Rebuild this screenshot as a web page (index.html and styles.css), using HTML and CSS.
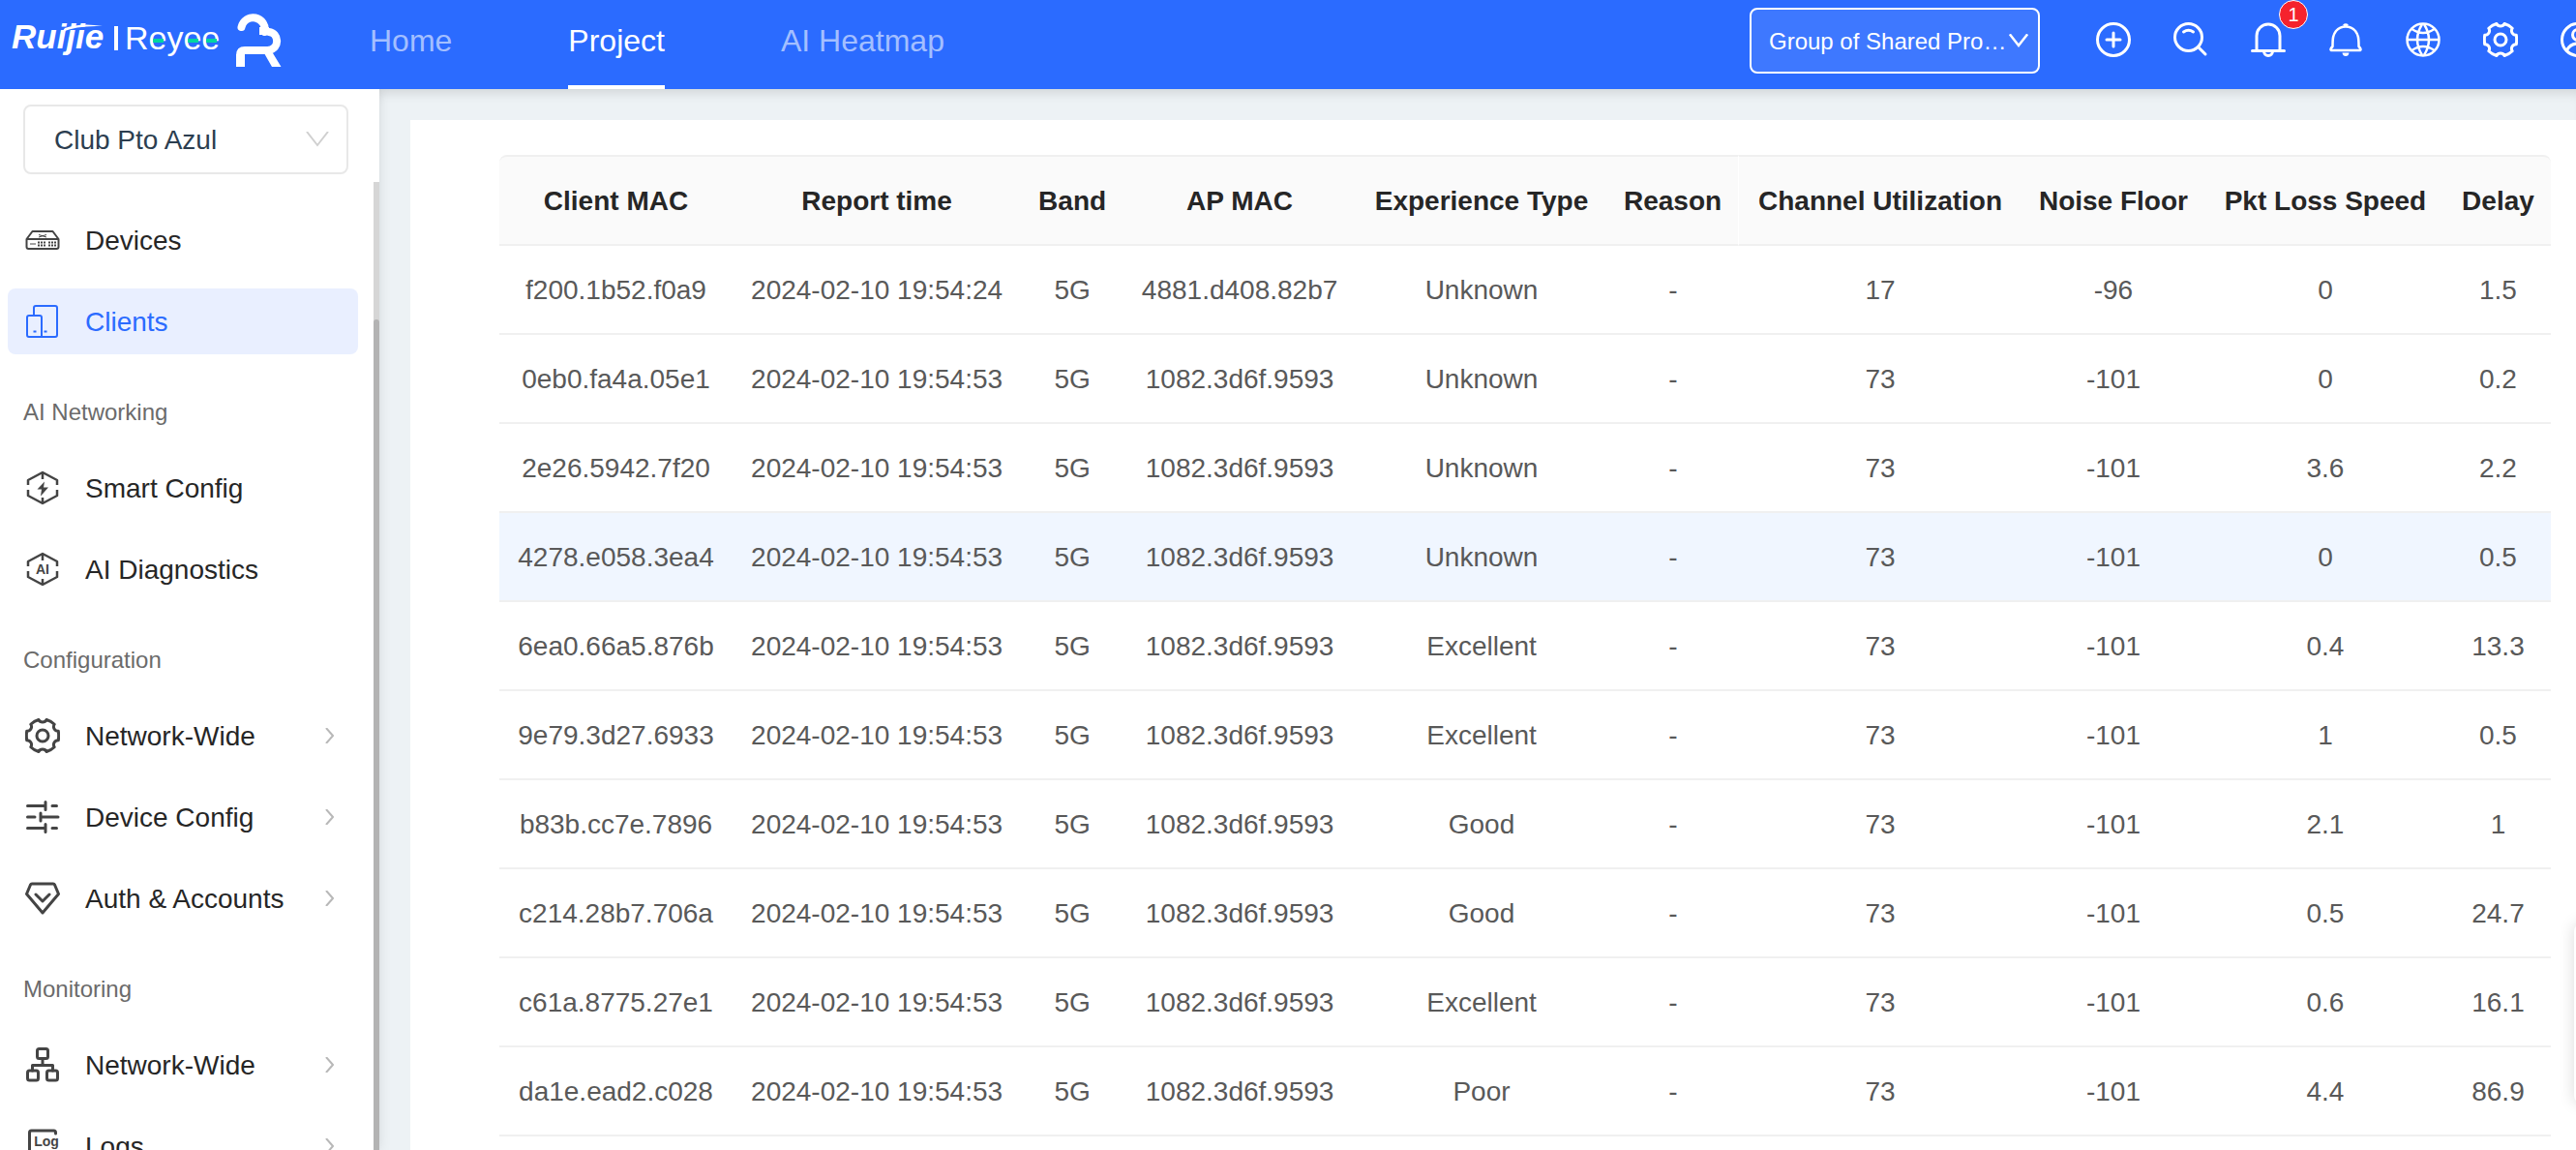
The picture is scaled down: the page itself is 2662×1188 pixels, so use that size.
FILE: index.html
```html
<!DOCTYPE html>
<html lang="en">
<head>
<meta charset="utf-8">
<title>Clients</title>
<link rel="stylesheet" href="styles.css">
</head>
<body>
<svg class="sprite" aria-hidden="true">
  <symbol id="gear" viewBox="0 0 36 36"><path d="M34.3 13.3Q35 18 34.3 22.7A4.6 4.6 0 0 0 30.2 29.8Q27 33 22.1 34.5A4.6 4.6 0 0 0 13.9 34.5Q9 33 5.8 29.8A4.6 4.6 0 0 0 1.7 22.7Q1 18 1.7 13.3A4.6 4.6 0 0 0 5.8 6.2Q9 3 13.9 1.5A4.6 4.6 0 0 0 22.1 1.5Q27 3 30.2 6.2A4.6 4.6 0 0 0 34.3 13.3Z"/><circle cx="18" cy="18" r="6"/></symbol>
  <symbol id="down" viewBox="0 0 24 16"><path d="M1 0 12 14 23 0"/></symbol>
  <symbol id="right" viewBox="0 0 10 16"><path d="M1 0 8 8 1 16"/></symbol>
  <symbol id="hex" viewBox="0 0 36 36"><path d="M3 15V10L18 2 33 10V15M3 20V26L18 34 33 26V20M18 2V9M18 34V28"/></symbol>
  <symbol id="tree" viewBox="0 0 36 36"><rect x="12.5" y="1.500" width="11" height="10" rx="2"/><rect x="2.500" y="24" width="11" height="10" rx="2"/><rect x="22.500" y="24" width="11" height="10" rx="2"/><path d="M18 11.500V18M7.500 24V18.500H28.500V24"/></symbol>
</svg>

<header class="topbar">
  <a class="logo" href="#" aria-label="Ruijie Reyee">
    <svg width="280" height="58" viewBox="0 0 280 58">
      <text class="logo-ruijie" x="0" y="36">Ruijie</text>
      <path class="logo-fill" d="M52 19Q68 12 94 13Q72 9 55 15Z"/>
      <path class="logo-fill" d="M106 13h4v25h-4z"/>
      <text class="logo-reyee" x="117" y="37">Reyee</text>
      <path class="logo-accent" d="M146 26h11v4h-11zM182 26h11v4h-11zM201 26h11v4h-11z"/>
      <path class="logo-stroke" d="M237.500 14A12 12 0 0 1 261.500 19V17M266 19C276 20 278 36 265 38H241Q236 38 236 43"/>
      <path class="logo-fill" d="M232 42h9v13h-9zM261 41h9l8.500 14h-9.500zM256 14h10v8h-10z"/>
    </svg>
  </a>
  <nav class="topnav">
    <a href="#">Home</a>
    <a href="#" class="active">Project</a>
    <a href="#">AI Heatmap</a>
  </nav>
  <div class="group-select">
    <select aria-label="Project group"><option>Group of Shared Pro…</option></select>
    <svg class="caret"><use href="#down"/></svg>
  </div>
  <div class="tools">
    <button aria-label="Add"><svg viewBox="0 0 36 36"><circle cx="18" cy="18" r="16.500"/><path d="M18 11V25M11 18H25"/></svg></button>
    <button aria-label="Search"><svg viewBox="0 0 36 36"><circle cx="15.500" cy="15.500" r="14"/><path d="M10.500 10Q15.500 6.500 20.500 10M26 26 33 33"/></svg></button>
    <button aria-label="Alarms"><svg viewBox="0 0 36 36"><path d="M1.500 29.500H34.500M6 29V14A12 12 0 0 1 30 14V29M13.500 30A4.500 4.500 0 0 0 22.500 30"/></svg><span class="badge">1</span></button>
    <button aria-label="Notices"><svg class="medium" viewBox="0 0 36 36"><path d="M3 29H33Q34.500 28 31.500 25C31.500 16 31 13 28 9Q24 4.500 18 4.500Q12 4.500 8 9C5 13 4.500 16 4.500 25Q1.500 28 3 29ZM16 3.500Q18 1.500 20 3.500"/><path class="solid" d="M14.500 31.500H21.500Q21 35 18 35Q15 35 14.500 31.500Z"/></svg></button>
    <button aria-label="Language"><svg class="medium" viewBox="0 0 36 36"><circle cx="18" cy="18" r="16.500"/><path d="M1.500 18H34.500M6.500 7Q18 15 29.500 7M6.500 29Q18 21 29.500 29M17 2Q7 18 17 34M19 2Q29 18 19 34"/></svg></button>
    <button aria-label="Settings"><svg><use href="#gear"/></svg></button>
    <button aria-label="Account"><svg viewBox="0 0 36 36"><circle cx="18" cy="18" r="16.500"/><circle cx="18" cy="13" r="5.500"/><path d="M6.500 29Q10 22 18 22Q26 22 29.500 29"/></svg></button>
  </div>
</header>

<div class="body">
  <aside class="sidebar">
    <div class="site-select">
      <select aria-label="Project"><option>Club Pto Azul</option></select>
      <svg class="caret"><use href="#down"/></svg>
    </div>
    <div class="scroller">
      <nav class="menu">
        <a href="#"><svg class="icon thin" viewBox="0 0 36 36"><path d="M1.500 17 7.500 9H28.500L34.500 17V25Q34.500 27 32.500 27H3.500Q1.500 27 1.500 25ZM1.500 17H34.500"/><path class="fine" d="M5 22H11M14 12.500 22 15M14 15 22 12.500"/><path class="dots" d="M13 20.500H22M13 23.500H22M24 20.500H33M24 23.500H33"/></svg><span>Devices</span></a>
        <a href="#" class="active"><svg class="icon thin" viewBox="0 0 36 36"><path d="M9 11.500V4Q9 2 11 2H31Q33 2 33 4V32Q33 34 31 34H4Q2 34 2 32V14Q2 12 4 12H15Q17 12 17 14V34M8.500 28.500H11.500M19.500 28.500H22.500"/></svg><span>Clients</span></a>
        <h2>AI Networking</h2>
        <a href="#"><svg class="icon medium" viewBox="0 0 36 36"><use href="#hex"/><path class="solid" d="M20 11.500 12.500 19.500H17L16 26.500 24 17.500H19Z"/></svg><span>Smart Config</span></a>
        <a href="#"><svg class="icon medium" viewBox="0 0 36 36"><use href="#hex"/><text class="glyph" x="18" y="23">AI</text></svg><span>AI Diagnostics</span></a>
        <h2>Configuration</h2>
        <a href="#"><svg class="icon"><use href="#gear"/></svg><span>Network-Wide</span><svg class="arrow"><use href="#right"/></svg></a>
        <a href="#"><svg class="icon" viewBox="0 0 36 36"><path d="M2.500 6.500H20.500M28 6.500H32.500M21 2.500V10.500M2.500 18H10M16 18H34M16 14V22M2.500 29.500H20.500M28 29.500H32.500M21 25.500V33.500"/></svg><span>Device Config</span><svg class="arrow"><use href="#right"/></svg></a>
        <a href="#"><svg class="icon" viewBox="0 0 36 36"><path d="M7 3H29Q30 3 30.500 4L34.500 13.500 18 33 1.500 13.500 5.500 4Q6 3 7 3ZM11 14 18 21 25 14"/></svg><span>Auth &amp; Accounts</span><svg class="arrow"><use href="#right"/></svg></a>
        <h2>Monitoring</h2>
        <a href="#"><svg class="icon"><use href="#tree"/></svg><span>Network-Wide</span><svg class="arrow"><use href="#right"/></svg></a>
        <a href="#"><svg class="icon" viewBox="0 0 36 36"><path d="M31.500 5V4Q31.500 2 29.500 2H6.500Q4.500 2 4.500 4V32Q4.500 34 6.500 34H29.500Q31.500 34 31.500 32V24M12 24H26"/><text class="glyph" x="22" y="18">Log</text></svg><span>Logs</span><svg class="arrow"><use href="#right"/></svg></a>
      </nav>
      <div class="track"><div class="thumb"></div></div>
    </div>
  </aside>

  <main class="content">
    <section class="card">
      <table>
        <colgroup><col class="c-mac"><col class="c-time"><col class="c-band"><col class="c-ap"><col class="c-exp"><col class="c-reason"><col class="c-util"><col class="c-noise"><col class="c-loss"><col class="c-delay"></colgroup>
        <thead>
          <tr><th>Client MAC</th><th>Report time</th><th>Band</th><th>AP MAC</th><th>Experience Type</th><th class="edge">Reason</th><th>Channel Utilization</th><th>Noise Floor</th><th>Pkt Loss Speed</th><th>Delay</th></tr>
        </thead>
        <tbody>
          <tr><td>f200.1b52.f0a9</td><td>2024-02-10 19:54:24</td><td>5G</td><td>4881.d408.82b7</td><td>Unknown</td><td>-</td><td>17</td><td>-96</td><td>0</td><td>1.5</td></tr>
          <tr><td>0eb0.fa4a.05e1</td><td>2024-02-10 19:54:53</td><td>5G</td><td>1082.3d6f.9593</td><td>Unknown</td><td>-</td><td>73</td><td>-101</td><td>0</td><td>0.2</td></tr>
          <tr><td>2e26.5942.7f20</td><td>2024-02-10 19:54:53</td><td>5G</td><td>1082.3d6f.9593</td><td>Unknown</td><td>-</td><td>73</td><td>-101</td><td>3.6</td><td>2.2</td></tr>
          <tr class="hovered"><td>4278.e058.3ea4</td><td>2024-02-10 19:54:53</td><td>5G</td><td>1082.3d6f.9593</td><td>Unknown</td><td>-</td><td>73</td><td>-101</td><td>0</td><td>0.5</td></tr>
          <tr><td>6ea0.66a5.876b</td><td>2024-02-10 19:54:53</td><td>5G</td><td>1082.3d6f.9593</td><td>Excellent</td><td>-</td><td>73</td><td>-101</td><td>0.4</td><td>13.3</td></tr>
          <tr><td>9e79.3d27.6933</td><td>2024-02-10 19:54:53</td><td>5G</td><td>1082.3d6f.9593</td><td>Excellent</td><td>-</td><td>73</td><td>-101</td><td>1</td><td>0.5</td></tr>
          <tr><td>b83b.cc7e.7896</td><td>2024-02-10 19:54:53</td><td>5G</td><td>1082.3d6f.9593</td><td>Good</td><td>-</td><td>73</td><td>-101</td><td>2.1</td><td>1</td></tr>
          <tr><td>c214.28b7.706a</td><td>2024-02-10 19:54:53</td><td>5G</td><td>1082.3d6f.9593</td><td>Good</td><td>-</td><td>73</td><td>-101</td><td>0.5</td><td>24.7</td></tr>
          <tr><td>c61a.8775.27e1</td><td>2024-02-10 19:54:53</td><td>5G</td><td>1082.3d6f.9593</td><td>Excellent</td><td>-</td><td>73</td><td>-101</td><td>0.6</td><td>16.1</td></tr>
          <tr><td>da1e.ead2.c028</td><td>2024-02-10 19:54:53</td><td>5G</td><td>1082.3d6f.9593</td><td>Poor</td><td>-</td><td>73</td><td>-101</td><td>4.4</td><td>86.9</td></tr>
        </tbody>
      </table>
    </section>
  </main>
</div>
<div class="float-panel"></div>
</body>
</html>
```
FILE: styles.css
```css
* { box-sizing: border-box; }

body {
  margin: 0;
  height: 100vh;
  overflow: hidden;
  display: flex;
  flex-direction: column;
  font-family: "Liberation Sans", Arial, sans-serif;
  font-size: 28px;
  color: #262626;
  background: #edf2f5;
}

a { color: inherit; text-decoration: none; }
.sprite { position: absolute; width: 0; height: 0; }
svg { fill: none; stroke: currentColor; stroke-width: 3; stroke-linecap: round; stroke-linejoin: round; }
.thin { stroke-width: 2; stroke-linecap: butt; }
.medium { stroke-width: 2.5; stroke-linecap: butt; }
.solid { fill: currentColor; stroke: none; }
.fine { stroke-width: 1; }
.dots { stroke-width: 2; stroke-dasharray: 2 1; }
.glyph { fill: currentColor; stroke: none; font-size: 14px; font-weight: 700; text-anchor: middle; }

select {
  appearance: none;
  width: 100%;
  height: 100%;
  border: 2px solid #e8e8e8;
  border-radius: 8px;
  background: #fff;
  color: #2c3e50;
  font: inherit;
  padding: 0 32px;
}

/* Top bar */
.topbar {
  position: relative;
  z-index: 2;
  flex: none;
  display: flex;
  align-items: flex-start;
  height: 92px;
  padding-left: 12px;
  overflow: hidden;
  background: #2b6bff;
  color: #fff;
}
.logo { width: 370px; padding-top: 14px; }
.logo svg { display: block; }
.logo-ruijie { fill: #fff; stroke: none; font-size: 35px; font-weight: 700; font-style: italic; }
.logo-reyee { fill: #fff; stroke: none; font-size: 34px; }
.logo-fill { fill: #fff; stroke: none; }
.logo-accent { fill: #00d6a0; stroke: none; }
.logo-stroke { stroke: #fff; stroke-width: 8; }

.topnav { display: flex; gap: 120px; height: 100%; font-size: 32px; color: #a3bfff; }
.topnav a { display: flex; align-items: center; padding-bottom: 4px; border-bottom: 4px solid transparent; }
.topnav .active { color: #fff; border-color: #fff; }

.group-select { position: relative; width: 300px; height: 68px; margin: 8px 58px 0 auto; font-size: 24px; }
.group-select select { border-color: #fff; background: #3e78ff; color: #fff; padding: 0 16px 0 18px; }
.caret { position: absolute; pointer-events: none; stroke-width: 2; stroke-linecap: butt; stroke-linejoin: miter; }
.group-select .caret { right: 12px; top: 27px; width: 20px; height: 14px; stroke-width: 3; }

.tools { display: flex; gap: 44px; margin: 23px -20px 0 0; }
.tools button { position: relative; width: 36px; height: 36px; padding: 0; border: 0; background: none; color: inherit; font: inherit; }
.tools svg { display: block; width: 36px; height: 36px; }
.badge {
  position: absolute;
  left: 29px;
  top: -23px;
  width: 30px;
  height: 30px;
  border: 1px solid #fff;
  border-radius: 50%;
  background: #f5222d;
  font-size: 20px;
  line-height: 28px;
  text-align: center;
}

/* Sidebar */
.body { flex: 1; min-height: 0; display: flex; }
.sidebar {
  position: relative;
  z-index: 1;
  flex: none;
  width: 392px;
  display: flex;
  flex-direction: column;
  background: #fff;
  box-shadow: 0 0 12px rgba(0, 0, 0, .1);
}
.site-select { position: relative; flex: none; height: 72px; margin: 16px 32px 8px 24px; }
.site-select .caret { right: 20px; top: 28px; width: 24px; height: 16px; color: #d0d0d0; }
.site-select select { padding-left: 30px; }
.scroller { flex: 1; min-height: 0; display: flex; overflow: hidden; }
.menu { flex: 1; display: flex; flex-direction: column; gap: 16px; padding: 26px 16px 0 8px; }
.menu a { flex: none; display: flex; align-items: center; height: 68px; padding: 0 24px 0 18px; border-radius: 8px; }
.menu span { padding-top: 2px; }
.menu .active { background: #e9efff; color: #2b6bff; }
.menu h2 { flex: none; margin: 0; padding: 30px 16px 14px; font-size: 24px; line-height: 28px; font-weight: 400; color: #6b6b6b; }
.icon { width: 36px; height: 36px; margin-right: 26px; color: #444; }
.active .icon { color: inherit; }
.arrow { width: 10px; height: 16px; margin-left: auto; stroke-width: 2; stroke-linecap: butt; color: #b8b8b8; }
.track { flex: none; width: 6px; display: flex; flex-direction: column; background: #d6d6d6; }
.thumb { flex: 1; margin-top: 142px; border-radius: 3px 3px 0 0; background: #b3b3b3; }

/* Client table */
.content { flex: 1; min-width: 0; padding: 32px 0 0 32px; box-shadow: inset 0 12px 12px -8px rgba(0, 0, 0, .12); }
.card { min-height: 100%; padding: 36px 26px 0 92px; background: #fff; }
table { width: 100%; table-layout: fixed; border-collapse: separate; border-spacing: 0; }
th, td { height: 92px; padding: 2px 0 0; text-align: center; white-space: nowrap; border-bottom: 2px solid #f0f0f0; }
th { height: 94px; border-top: 2px solid #f0f0f0; background: #fafafa; font-weight: 700; }
th:first-child { border-top-left-radius: 8px; }
th:last-child { border-top-right-radius: 8px; }
.edge { border-right: 1px solid #fff; }
td { color: #595959; }
.hovered td { background: #f0f6ff; }
.c-mac { width: 11.37%; }
.c-time { width: 14.06%; }
.c-band { width: 5%; }
.c-ap { width: 11.32%; }
.c-exp { width: 12.26%; }
.c-reason { width: 6.42%; }
.c-util { width: 13.77%; }
.c-noise { width: 8.96%; }
.c-loss { width: 11.7%; }
.c-delay { width: 5.14%; }

.float-panel {
  position: fixed;
  z-index: 3;
  right: -62px;
  bottom: 48px;
  width: 64px;
  height: 186px;
  border-radius: 8px;
  background: #fff;
  box-shadow: 0 0 16px rgba(0, 0, 0, .15);
}
```
